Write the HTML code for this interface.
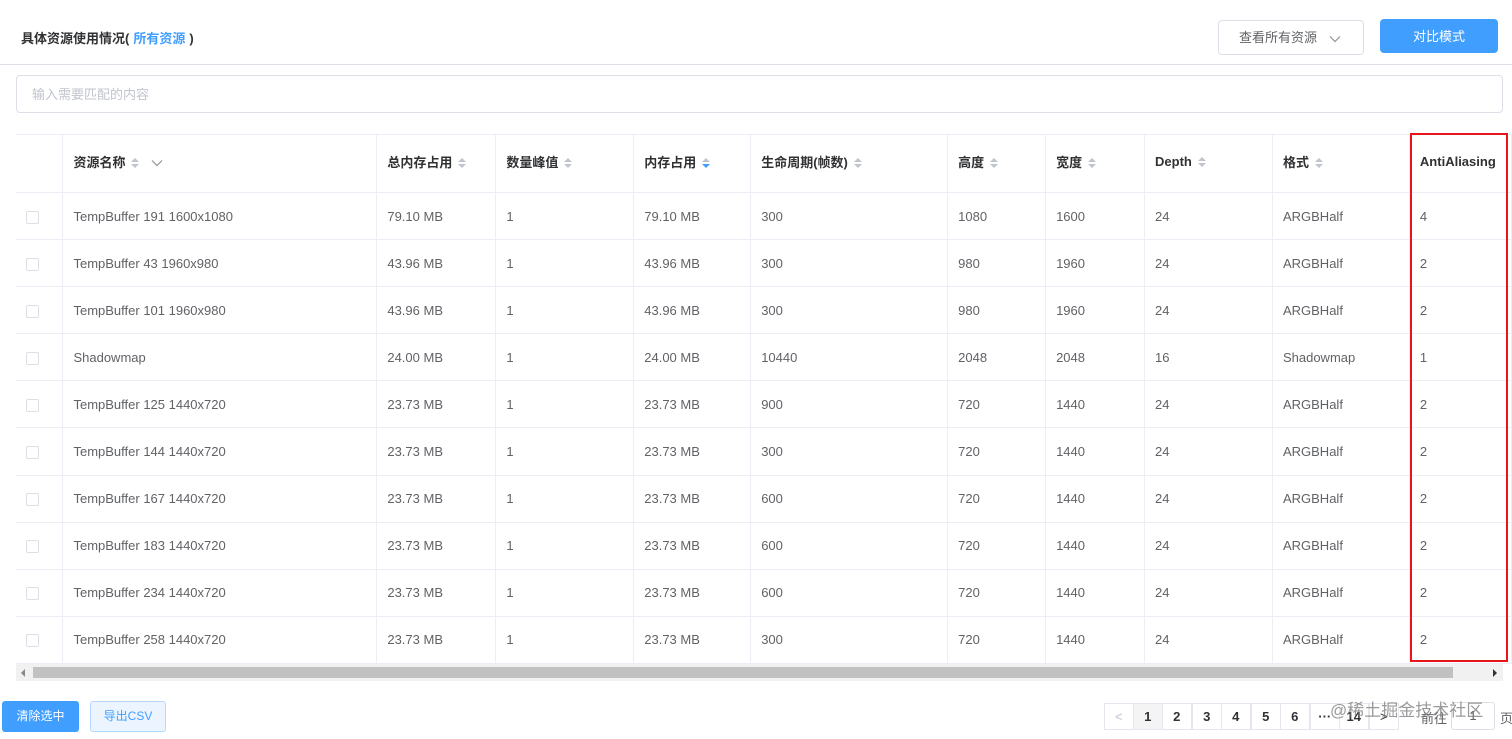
<!DOCTYPE html><html><head><meta charset="utf-8"><style>
*{box-sizing:border-box;margin:0;padding:0}
body{width:1512px;height:739px;overflow:hidden;background:#fff;font-family:"Liberation Sans","Noto Sans CJK SC",sans-serif;color:#606266;font-size:13px;position:relative}
.a{position:absolute}
table{border-collapse:collapse;position:absolute;left:16px;top:134px;table-layout:fixed}
td,th{border-bottom:1px solid #ebeef5;border-right:1px solid #ebeef5;padding-left:10px;text-align:left;white-space:nowrap;overflow:hidden}
th{height:58px;color:#303133;font-weight:bold;font-size:13px;padding-bottom:5px}
td{height:47.1px}
.s{display:inline-block;width:8px;height:11px;vertical-align:middle;margin-left:6px;position:relative}
.s:before{content:"";position:absolute;left:0;top:0;border:4px solid transparent;border-bottom:4px solid #c0c4cc;border-top:0}
.s:after{content:"";position:absolute;left:0;top:6px;border:4px solid transparent;border-top:4px solid #c0c4cc;border-bottom:0}
.s.b:after{border-top-color:#409eff}
.cb{display:inline-block;width:13px;height:13px;border:1px solid #dcdfe6;border-radius:2px;vertical-align:middle}
.pg{position:absolute;top:703px;height:27px;width:29.5px;border:1px solid #e4e7ed;text-align:center;line-height:25px;font-weight:bold;color:#303133;font-size:13px;background:#fff}
</style></head><body>
<div class="a" style="left:21px;top:28px;font-size:13px;font-weight:bold;color:#303133">具体资源使用情况(<span style="color:#409eff;margin:0 4px">所有资源</span>)</div>
<div class="a" style="left:1218px;top:20px;width:146px;height:35px;border:1px solid #dcdfe6;border-radius:4px;line-height:33px;padding-left:20px;color:#606266;font-size:13px">查看所有资源<svg width="12" height="8" style="margin-left:12px;vertical-align:middle"><path d="M1 1.5L6 6.5L11 1.5" fill="none" stroke="#909399" stroke-width="1.2"/></svg></div>
<div class="a" style="left:1380px;top:19px;width:118px;height:34px;background:#409eff;border-radius:4px;color:#fff;text-align:center;line-height:36px;font-size:13px">对比模式</div>
<div class="a" style="left:0;top:64px;width:1512px;height:1px;background:#dcdfe6"></div>
<div class="a" style="left:16px;top:75px;width:1487px;height:38px;border:1px solid #dcdfe6;border-radius:4px;padding-left:15px;line-height:37px;color:#c0c4cc;font-size:13px">输入需要匹配的内容</div>
<table>
<colgroup><col style="width:47px"><col style="width:314px"><col style="width:119px"><col style="width:138px"><col style="width:117px"><col style="width:197px"><col style="width:98px"><col style="width:99px"><col style="width:128px"><col style="width:137px"><col style="width:102px"></colgroup>
<tr style="border-top:1px solid #ebeef5"><th></th><th>资源名称<span class="s"></span><svg width="12" height="8" style="margin-left:12px;vertical-align:middle"><path d="M1 1.5L6 6.5L11 1.5" fill="none" stroke="#909399" stroke-width="1.2"/></svg></th><th>总内存占用<span class="s"></span></th><th>数量峰值<span class="s"></span></th><th>内存占用<span class="s b"></span></th><th>生命周期(帧数)<span class="s"></span></th><th>高度<span class="s"></span></th><th>宽度<span class="s"></span></th><th>Depth<span class="s"></span></th><th>格式<span class="s"></span></th><th>AntiAliasing</th></tr>
<tr><td><span class="cb"></span></td><td>TempBuffer 191 1600x1080</td><td>79.10 MB</td><td>1</td><td>79.10 MB</td><td>300</td><td>1080</td><td>1600</td><td>24</td><td>ARGBHalf</td><td>4</td></tr>
<tr><td><span class="cb"></span></td><td>TempBuffer 43 1960x980</td><td>43.96 MB</td><td>1</td><td>43.96 MB</td><td>300</td><td>980</td><td>1960</td><td>24</td><td>ARGBHalf</td><td>2</td></tr>
<tr><td><span class="cb"></span></td><td>TempBuffer 101 1960x980</td><td>43.96 MB</td><td>1</td><td>43.96 MB</td><td>300</td><td>980</td><td>1960</td><td>24</td><td>ARGBHalf</td><td>2</td></tr>
<tr><td><span class="cb"></span></td><td>Shadowmap</td><td>24.00 MB</td><td>1</td><td>24.00 MB</td><td>10440</td><td>2048</td><td>2048</td><td>16</td><td>Shadowmap</td><td>1</td></tr>
<tr><td><span class="cb"></span></td><td>TempBuffer 125 1440x720</td><td>23.73 MB</td><td>1</td><td>23.73 MB</td><td>900</td><td>720</td><td>1440</td><td>24</td><td>ARGBHalf</td><td>2</td></tr>
<tr><td><span class="cb"></span></td><td>TempBuffer 144 1440x720</td><td>23.73 MB</td><td>1</td><td>23.73 MB</td><td>300</td><td>720</td><td>1440</td><td>24</td><td>ARGBHalf</td><td>2</td></tr>
<tr><td><span class="cb"></span></td><td>TempBuffer 167 1440x720</td><td>23.73 MB</td><td>1</td><td>23.73 MB</td><td>600</td><td>720</td><td>1440</td><td>24</td><td>ARGBHalf</td><td>2</td></tr>
<tr><td><span class="cb"></span></td><td>TempBuffer 183 1440x720</td><td>23.73 MB</td><td>1</td><td>23.73 MB</td><td>600</td><td>720</td><td>1440</td><td>24</td><td>ARGBHalf</td><td>2</td></tr>
<tr><td><span class="cb"></span></td><td>TempBuffer 234 1440x720</td><td>23.73 MB</td><td>1</td><td>23.73 MB</td><td>600</td><td>720</td><td>1440</td><td>24</td><td>ARGBHalf</td><td>2</td></tr>
<tr><td><span class="cb"></span></td><td>TempBuffer 258 1440x720</td><td>23.73 MB</td><td>1</td><td>23.73 MB</td><td>300</td><td>720</td><td>1440</td><td>24</td><td>ARGBHalf</td><td>2</td></tr>
</table>
<div class="a" style="left:16px;top:664px;width:1487px;height:17px;background:#f1f1f1"></div>
<div class="a" style="left:33px;top:667px;width:1420px;height:11px;background:#c1c1c1"></div>
<div class="a" style="left:21px;top:669px;border:4px solid transparent;border-right:4px solid #888;border-left:0"></div>
<div class="a" style="left:1493px;top:669px;border:4px solid transparent;border-left:4px solid #333;border-right:0"></div>
<div class="a" style="left:1410px;top:133px;width:98px;height:529px;border:2px solid #e8151a"></div>
<div class="a" style="left:2px;top:701px;width:77px;height:31px;background:#409eff;border-radius:3px;color:#fff;text-align:center;line-height:31px;font-size:12px">清除选中</div>
<div class="a" style="left:90px;top:701px;width:76px;height:31px;background:#ecf5ff;border:1px solid #b3d8ff;border-radius:3px;color:#409eff;text-align:center;line-height:29px;font-size:12px">导出CSV</div>
<div class="pg" style="left:1104px;color:#c0c4cc;font-weight:normal">&lt;</div>
<div class="pg" style="left:1133px;background:#f4f4f5">1</div>
<div class="pg" style="left:1162px">2</div>
<div class="pg" style="left:1192px">3</div>
<div class="pg" style="left:1221px">4</div>
<div class="pg" style="left:1251px">5</div>
<div class="pg" style="left:1280px">6</div>
<div class="pg" style="left:1310px">···</div>
<div class="pg" style="left:1339px">14</div>
<div class="pg" style="left:1369px;font-weight:normal">&gt;</div>
<div class="a" style="left:1421px;top:708px;color:#606266">前往</div>
<div class="a" style="left:1451px;top:702px;width:44px;height:28px;border:1px solid #dcdfe6;border-radius:3px;text-align:center;line-height:26px">1</div>
<div class="a" style="left:1500px;top:708px;color:#606266">页</div>
<div class="a" style="left:1330px;top:696px;font-size:17px;color:rgba(120,120,120,0.75)">@稀土掘金技术社区</div>
</body></html>
